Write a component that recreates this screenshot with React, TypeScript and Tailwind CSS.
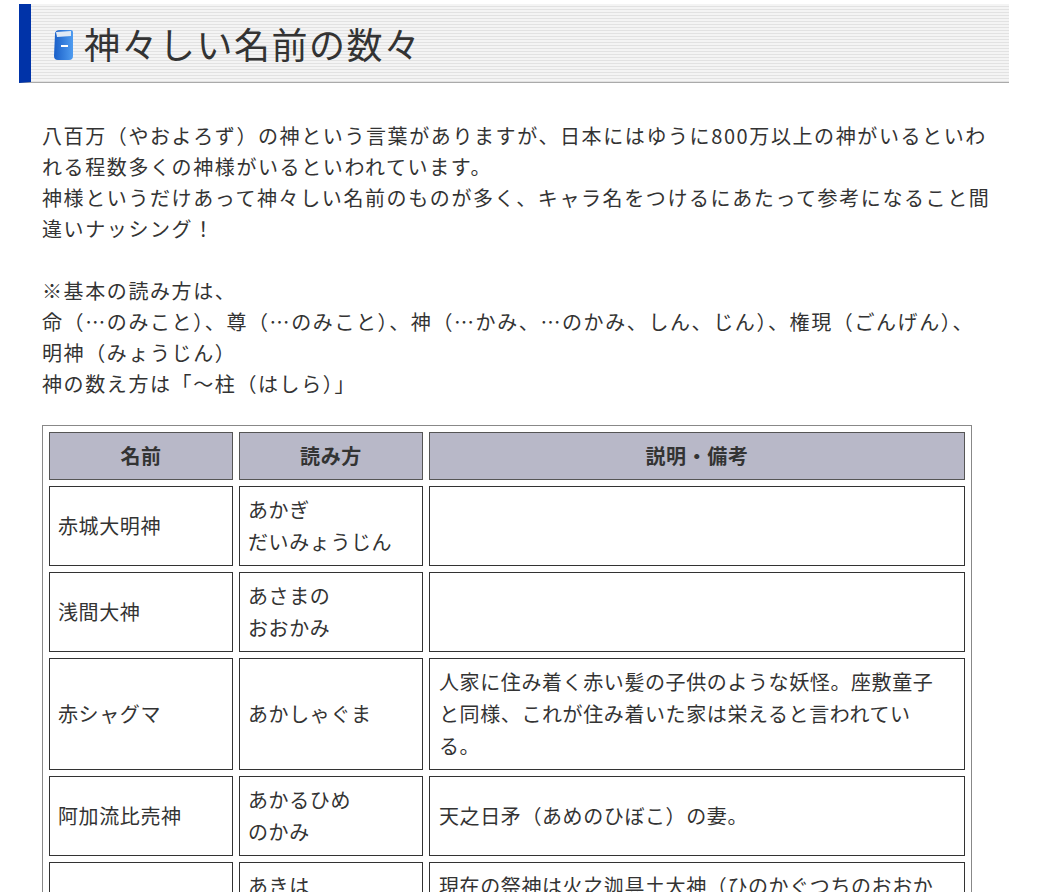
import React from "react";

const rows: [string, string[], string][] = [
  ["赤城大明神", ["あかぎ", "だいみょうじん"], ""],
  ["浅間大神", ["あさまの", "おおかみ"], ""],
  ["赤シャグマ", ["あかしゃぐま"], "人家に住み着く赤い髪の子供のような妖怪。座敷童子と同様、これが住み着いた家は栄えると言われている。"],
  ["阿加流比売神", ["あかるひめ", "のかみ"], "天之日矛（あめのひぼこ）の妻。"],
  ["秋葉権現", ["あきは", "ごんげん"], "現在の祭神は火之迦具土大神（ひのかぐつちのおおかみ）。"],
];

export default function App() {
  return (
    <div className="w-[1040px] h-[892px] overflow-hidden bg-white text-[#333]" style={{ fontFamily: '"Noto Sans CJK JP", "Noto Sans", sans-serif' }}>
      <div className="pt-[4px] pl-[19px] w-[1009px]">
        <div className="flex items-center h-[79px] border-l-[12px] border-[#0033a8] border-b border-b-[#aaa] bg-[repeating-linear-gradient(180deg,#f4f4f4_0px,#f4f4f4_2px,#e2e2e2_2px,#e2e2e2_3px)]">
          <svg width="24" height="34" viewBox="0 0 24 34" className="ml-[20px] mt-[4px]">
            <defs>
              <linearGradient id="bk" x1="0" x2="1">
                <stop offset="0" stopColor="#1a5fc8" />
                <stop offset="1" stopColor="#4f9cf0" />
              </linearGradient>
            </defs>
            <path d="M4 6 Q4 2 9 2 L20 2 Q22 2 22 4 L22 28 Q22 32 18 32 L7 32 Q3 32 3 28 Z" fill="url(#bk)" />
            <path d="M5 4 L20 3 L20 8 L6 9 Z" fill="#dfe9f5" />
            <rect x="10" y="17" width="7" height="2" fill="#fff" />
          </svg>
          <h1 className="ml-[9px] text-[36px] leading-none text-[#333] font-normal tracking-[1.5px]">神々しい名前の数々</h1>
        </div>
      </div>
      <div className="pl-[42px] pr-[48px] pt-[37px] text-[20px] leading-[31px] tracking-[1.6px]">
        <p>八百万（やおよろず）の神という言葉がありますが、日本にはゆうに800万以上の神がいるといわれる程数多くの神様がいるといわれています。<br />神様というだけあって神々しい名前のものが多く、キャラ名をつけるにあたって参考になること間違いナッシング！</p>
        <p className="mt-[31px]">※基本の読み方は、<br />命（…のみこと）、尊（…のみこと）、神（…かみ、…のかみ、しん、じん）、権現（ごんげん）、明神（みょうじん）<br />神の数え方は「〜柱（はしら）」</p>
        <table className="mt-[26px] w-[930px] border border-[#888] border-separate border-spacing-[6px] text-[20px] leading-[32px] tracking-[0.6px]">
          <thead>
            <tr>
              <th className="w-[184px] h-[48px] bg-[#b8b8c8] border border-[#555] font-bold">名前</th>
              <th className="w-[184px] h-[48px] bg-[#b8b8c8] border border-[#555] font-bold">読み方</th>
              <th className="h-[48px] bg-[#b8b8c8] border border-[#555] font-bold">説明・備考</th>
            </tr>
          </thead>
          <tbody>
            {rows.map((r) => (
              <tr key={r[0]}>
                <td className="border border-[#333] px-[8px] py-[7px] h-[80px] align-middle">{r[0]}</td>
                <td className="border border-[#333] px-[8px] py-[7px] align-middle">{r[1].map((s, i) => <div key={i}>{s}</div>)}</td>
                <td className="border border-[#333] px-[9px] pr-[20px] py-[7px] align-middle">{r[2]}</td>
              </tr>
            ))}
          </tbody>
        </table>
      </div>
    </div>
  );
}
